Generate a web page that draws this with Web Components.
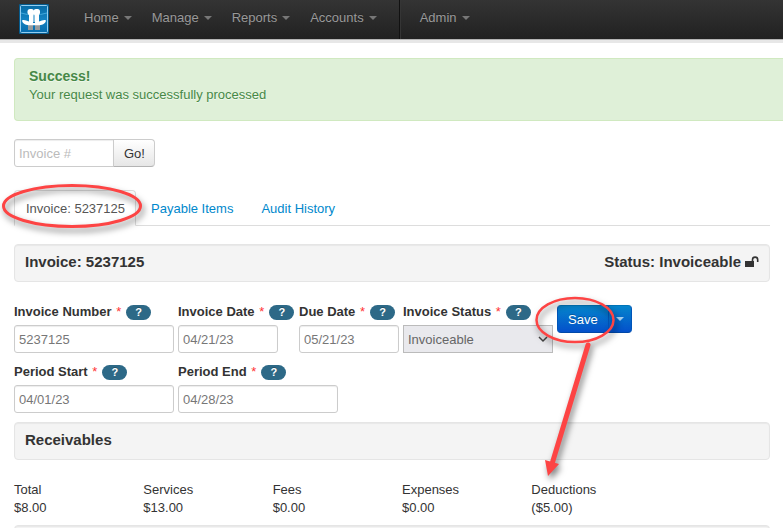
<!DOCTYPE html>
<html lang="en">
<head>
<meta charset="utf-8">
<title>Invoice: 5237125</title>
<style>
  html { scrollbar-width: none; }
  body { margin: 0; background: #fff; color: #333; font: 13px/18px "Liberation Sans", Arial, sans-serif; }
</style>
</head>
<body>
<invoice-page></invoice-page>
<script>
const define = (name, html, setup) => {
  const template = document.createElement('template');
  template.innerHTML = html;
  customElements.define(name, class extends HTMLElement {
    constructor() {
      super();
      this.attachShadow({ mode: 'open' }).append(template.content.cloneNode(true));
    }
    connectedCallback() { if (setup) setup(this, this.shadowRoot); }
  });
};

define('brand-logo', `
<style>:host{display:block;width:30px;height:30px} svg{display:block}</style>
<svg width="30" height="30" viewBox="0 0 30 30" aria-hidden="true">
  <defs><linearGradient id="g" x2="0" y2="1"><stop stop-color="#086ba5"/><stop offset=".5" stop-color="#1583c2"/><stop offset="1" stop-color="#076cad"/></linearGradient></defs>
  <rect width="30" height="30" rx="1" fill="#075b8c"/>
  <rect x="1.5" y="1.5" width="27" height="27" rx="1" fill="url(#g)" stroke="#93cdf0"/>
  <path d="M2 9q13 4 26 0" fill="none" stroke="#43a9dc"/>
  <path d="M9 21h5v5H9zm7 0h5v5h-5z" fill="#969b9d"/>
  <rect x="8.500" y="5" width="6.500" height="6" rx="2.500" fill="#fff"/>
  <rect x="14.500" y="5" width="6.500" height="6" rx="2.500" fill="#fff"/>
  <path d="M10 9h4.500v9H10zm5.500 0H20v9h-4.500z" fill="#fff"/>
  <path d="M14 7h2v3.500h-2z" fill="#fff"/>
  <path d="M3 16.500C5.500 15.200 7 17 10 17.500h4v1.500h2v-1.500h4C23 17 24.500 15.200 27 16.500 26.500 20 22.500 21.300 19 21.300h-8C7.500 21.300 3.500 20 3 16.500Z" fill="#fff"/>
</svg>`);

define('nav-item', `
<style>
  :host{display:block}
  a{display:flex;align-items:center;gap:5px;padding:9px 10px 12px;color:#999;text-decoration:none;text-shadow:0 -1px 0 rgba(0,0,0,.25)}
  a::after{content:"";border:4px solid transparent;border-top-color:#777;border-bottom:0}
</style><a href="#"><slot></slot></a>`);

define('app-navbar', `
<style>
  :host{display:block;background:linear-gradient(#343434,#212121);box-shadow:0 1px 0 #b5b5b5,0 4px 0 #e7e7e7}
  nav{display:flex;padding-left:19px}
  brand-logo{margin:4px 25px 5px 0}
  .rule{width:1px;margin:0 9px 0 12px;background:#111;border-right:1px solid #353535}
</style>
<nav><brand-logo></brand-logo><nav-item>Home</nav-item><nav-item>Manage</nav-item><nav-item>Reports</nav-item><nav-item>Accounts</nav-item><span class="rule"></span><nav-item>Admin</nav-item></nav>`);

define('alert-box', `
<style>
  :host{display:block;padding:8px 14px 16px;border:1px solid #d0e9c0;border-right:0;border-radius:4px 0 0 4px;background:#dff0d8;color:#468847;text-shadow:0 1px 0 rgba(255,255,255,.5)}
  h4{margin:0;font-size:14px;line-height:19px}
</style>
<h4><slot name="title"></slot></h4><slot></slot>`);

define('invoice-search', `
<style>
  :host{display:block} form{display:flex}
  input,button{box-sizing:border-box;height:28px;font:inherit;border:1px solid #ccc;margin:0}
  input{width:100px;padding:4px;border-radius:3px 0 0 3px;box-shadow:inset 0 1px 1px rgba(0,0,0,.075)}
  input::placeholder{color:#bbb;opacity:1}
  button{margin-left:-1px;padding:1px 9px 0 10px;border-color:#ccc #ccc #b3b3b3;border-radius:0 4px 4px 0;background:linear-gradient(#fff,#e6e6e6);color:#333}
</style>
<form><input type="text" placeholder="Invoice #" aria-label="Invoice #"><button type="button">Go!</button></form>`);

define('tab-link', `
<style>
  :host{display:block;margin-bottom:-1px}
  a{display:block;padding:9px 12px 7px;border:1px solid transparent;border-radius:4px 4px 0 0;color:#08c;text-decoration:none}
  :host([active]) a{color:#555;background:#fff;border-color:#ddd #ddd #fff;padding:9px 10px 7px 11px}
</style><a href="#"><slot></slot></a>`);

define('tab-bar', `
<style>:host{display:flex;gap:2px;border-bottom:1px solid #ddd}</style><slot></slot>`);

define('panel-bar', `
<style>
  :host{display:flex;justify-content:space-between;align-items:center;min-height:18px;padding:8px 10px 10px;border:1px solid #e5e5e5;border-radius:4px;background:#f4f4f4;box-shadow:inset 0 1px 1px rgba(0,0,0,.05);font-size:15px;font-weight:bold}
</style><slot></slot><slot name="end"></slot>`);

define('unlock-icon', `
<style>:host{display:inline-block} svg{display:block}</style>
<svg width="14" height="12" viewBox="0 0 14 12" aria-hidden="true"><path d="M0 5h9v6H0z" fill="#333"/><path d="M7.500 6V3.700a2.600 2.600 0 0 1 5.200 0V6" fill="none" stroke="#333" stroke-width="1.600"/></svg>`);

define('help-badge', `
<style>
  :host{display:block}
  button{display:block;width:25px;height:15px;padding:0;border:0;border-radius:8px;background:#2d6987;color:#fff;font:bold 11px/15px "Liberation Sans",Arial,sans-serif;text-shadow:0 -1px 0 rgba(0,0,0,.25)}
</style><button type="button" aria-label="Help">?</button>`);

define('form-field', `
<style>
  :host{display:block}
  .head{display:flex;align-items:center;gap:5px;height:20px;margin-bottom:3px;white-space:nowrap}
  label{font-weight:bold} i{margin-left:1px;color:#f33;font-style:normal;font-weight:normal}
  input,select{display:block;box-sizing:border-box;height:28px;width:100%;font:inherit;margin:0;color:#777}
  input{padding:4px;border:1px solid #ccc;border-radius:3px;box-shadow:inset 0 1px 1px rgba(0,0,0,.075)}
  :host([short]) input{width:100px}
  .pick{display:grid;align-items:center}
  .pick>*{grid-area:1/1}
  select{appearance:none;padding:1px 4px 0;border:1px solid #bbb;border-radius:0;background:#e9e9ed;color:#666}
  svg{justify-self:end;margin-right:5px;pointer-events:none}
</style>
<div class="head"><label for="c"><span></span> <i>*</i></label><help-badge></help-badge></div>
<div class="control"></div>`, (el, root) => {
  root.querySelector('span').textContent = el.getAttribute('label');
  const control = root.querySelector('.control');
  if (el.hasAttribute('choice')) {
    control.innerHTML = '<div class="pick"><select id="c"><option></option></select><svg width="10" height="8" viewBox="0 0 10 8"><path d="M1 2l4 4 4-4" fill="none" stroke="#444" stroke-width="1.500"/></svg></div>';
    control.querySelector('option').textContent = el.getAttribute('value');
  } else {
    control.innerHTML = '<input id="c" type="text">';
    control.firstChild.value = el.getAttribute('value');
  }
});

define('split-button', `
<style>
  :host{display:flex}
  button{height:28px;margin:0;padding:1px 10px 0;border:1px solid #0060b0;border-color:#0074b8 #0055b8 #0048a8;background:linear-gradient(#0585cc,#0450cb);color:#fff;font:inherit;text-shadow:0 -1px 0 rgba(0,0,0,.25)}
  .main{border-radius:4px 0 0 4px}
  .toggle{margin-left:-1px;padding:0 7px;border-radius:0 4px 4px 0}
  .toggle::after{content:"";display:block;border:4px solid transparent;border-top-color:#a5d0ef;border-bottom:0}
</style><button class="main" type="button"><slot></slot></button><button class="toggle" type="button" aria-label="More save options"></button>`);

define('summary-item', `
<style>:host{display:block}</style><div><slot name="label"></slot></div><div><slot></slot></div>`);

define('callout-marks', `
<style>:host{position:absolute;top:0;left:0;pointer-events:none} svg{display:block;filter:drop-shadow(2px 4px 3px rgba(0,0,0,.5))}</style>
<svg width="640" height="500" viewBox="0 0 640 500" fill="none" stroke="#fd4444" aria-hidden="true">
  <ellipse cx="72" cy="206" rx="68.500" ry="20.500" stroke-width="3"/>
  <ellipse cx="575" cy="320" rx="38.500" ry="22" stroke-width="2.500"/>
  <path d="M588 345L552 464" stroke-width="5" stroke-linecap="round"/>
  <path d="M545 460l14 4-11 12z" fill="#fd4444" stroke="none"/>
</svg>`);

define('invoice-page', `
<style>
  :host{display:block;position:relative;overflow:hidden}
  main{display:flow-root;padding:0 13px 0 14px}
  alert-box{margin:19px -13px 18px 0}
  tab-bar{margin:23px 0 18px}
  .status{display:flex;align-items:center;gap:4px}
  .row{display:flex;gap:4px}
  .row+.row{margin-top:9px}
  .first{margin-top:20px}
  .w160{width:160px}.w117{width:117px}.w100{width:100px}.w150{width:150px}
  split-button{margin-top:3px}
  .receivables{margin-top:9px}
  .summary{display:grid;grid-template-columns:repeat(6,1fr);gap:20px;margin:21px 0 8px}
</style>
<app-navbar></app-navbar>
<main>
  <alert-box><span slot="title">Success!</span>Your request was successfully processed</alert-box>
  <invoice-search></invoice-search>
  <tab-bar><tab-link active>Invoice: 5237125</tab-link><tab-link>Payable Items</tab-link><tab-link>Audit History</tab-link></tab-bar>
  <panel-bar>Invoice: 5237125<span slot="end" class="status">Status: Invoiceable <unlock-icon></unlock-icon></span></panel-bar>
  <div class="row first">
    <form-field class="w160" label="Invoice Number" value="5237125"></form-field>
    <form-field class="w117" short label="Invoice Date" value="04/21/23"></form-field>
    <form-field class="w100" label="Due Date" value="05/21/23"></form-field>
    <form-field class="w150" choice label="Invoice Status" value="Invoiceable"></form-field>
    <split-button>Save</split-button>
  </div>
  <div class="row">
    <form-field class="w160" label="Period Start" value="04/01/23"></form-field>
    <form-field class="w160" label="Period End" value="04/28/23"></form-field>
  </div>
  <panel-bar class="receivables">Receivables</panel-bar>
  <div class="summary">
    <summary-item><span slot="label">Total</span>$8.00</summary-item>
    <summary-item><span slot="label">Services</span>$13.00</summary-item>
    <summary-item><span slot="label">Fees</span>$0.00</summary-item>
    <summary-item><span slot="label">Expenses</span>$0.00</summary-item>
    <summary-item><span slot="label">Deductions</span>($5.00)</summary-item>
  </div>
  <panel-bar></panel-bar>
</main>
<callout-marks></callout-marks>`);
</script>
</body>
</html>
